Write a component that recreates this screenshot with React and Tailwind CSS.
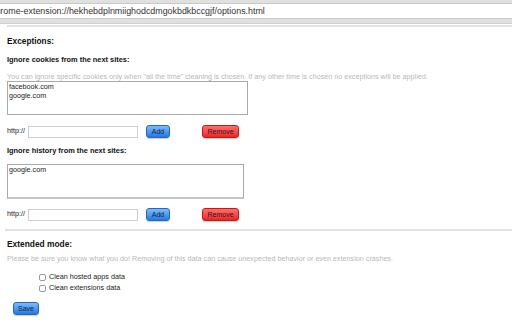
import React from 'react';

const font = { fontFamily: '"Liberation Sans", Arial, sans-serif' };

function Btn({ kind, children, className = '' }) {
    const styles = kind === 'red'
        ? 'bg-gradient-to-b from-[#ff6b6b] to-[#f01e1e] border-[#c41a1a]'
        : 'bg-gradient-to-b from-[#79bbfa] to-[#1f79e8] border-[#2c66b8]';
    return (
        <button className={`h-[13px] border rounded-[3px] text-[7px] leading-[11px] text-[#1b1b2b] shadow-[0_1px_1px_rgba(0,0,0,0.2)] ${styles} ${className}`}>
            {children}
        </button>
    );
}

function AddRow({ className = '' }) {
    return (
        <div className={`flex items-center h-[13px] ${className}`}>
            <span className="text-[7.2px] text-[#222] w-[21px]">http://</span>
            <div className="w-[110px] h-[12px] border border-[#cfcfcf] bg-white" />
            <Btn className="ml-[8px] w-[24px]">Add</Btn>
            <Btn kind="red" className="ml-[32px] w-[37px]">Remove</Btn>
        </div>
    );
}

function Check({ label, className = '' }) {
    return (
        <div className={`flex items-center h-[11px] pl-[32px] ${className}`}>
            <span className="w-[7px] h-[7px] rounded-[2px] border border-[#9a9a9a] bg-white" />
            <span className="ml-[3px] text-[7.2px] text-[#222]">{label}</span>
        </div>
    );
}

export default function App() {
    return (
        <div className="w-[512px] h-[320px] overflow-hidden bg-white" style={font}>
            {/* address bar */}
            <div className="h-[24px] bg-[#e0e0e0] pt-[3px] border-b border-[#cfcfcf]">
                <div className="h-[16px] bg-white border-y border-[#c9c9c9] overflow-hidden whitespace-nowrap">
                    <span className="block -ml-[9px] text-[8.9px] leading-[14px] text-[#333]">
                        chrome-extension://hekhebdplnmiighodcdmgokbdkbccgjf/options.html
                    </span>
                </div>
            </div>

            <div className="pl-[7px]">
                <div className="h-[2px] bg-[#e2e2e2] mt-[1px]" />

                <h2 className="mt-[9px] text-[8.3px] leading-[10px] font-bold text-[#111]">Exceptions:</h2>

                <h3 className="mt-[9px] text-[7.4px] leading-[9px] font-bold text-[#111]">Ignore cookies from the next sites:</h3>
                <p className="mt-[8px] text-[7.2px] leading-[9px] text-[#b8b8b8] whitespace-nowrap">
                    You can ignore specific cookies only when "all the time" cleaning is chosen. If any other time is chosen no exceptions will be applied.
                </p>
                <div className="w-[241px] h-[34px] border border-[#a9a9a9] text-[7.2px] leading-[8.5px] text-[#222] px-[1px] pt-[1px]">
                    <div>facebook.com</div>
                    <div>google.com</div>
                </div>
                <AddRow className="mt-[10px]" />

                <h3 className="mt-[8px] text-[7.4px] leading-[9px] font-bold text-[#111]">Ignore history from the next sites:</h3>
                <div className="mt-[9px] w-[237px] h-[35px] border border-[#a9a9a9] border-b-2 border-b-[#c4c4c4] text-[7.2px] leading-[8.5px] text-[#222] px-[1px] pt-[1px]">
                    <div>google.com</div>
                </div>
                <AddRow className="mt-[9px]" />

                <div className="h-[2px] bg-[#e2e2e2] mt-[8px] -ml-[2px]" />

                <h2 className="mt-[8px] text-[8.4px] leading-[10px] font-bold text-[#111]">Extended mode:</h2>
                <p className="mt-[5px] text-[7.2px] leading-[9px] text-[#b8b8b8] whitespace-nowrap">
                    Please be sure you know what you do! Removing of this data can cause unexpected behavior or even extension crashes.
                </p>
                <Check className="mt-[9px]" label="Clean hosted apps data" />
                <Check label="Clean extensions data" />
                <Btn className="mt-[5px] ml-[6px] w-[26px]">Save</Btn>

                <div className="h-[2px] bg-[#e2e2e2] mt-[5px] -ml-[4px]" />
            </div>
        </div>
    );
}
